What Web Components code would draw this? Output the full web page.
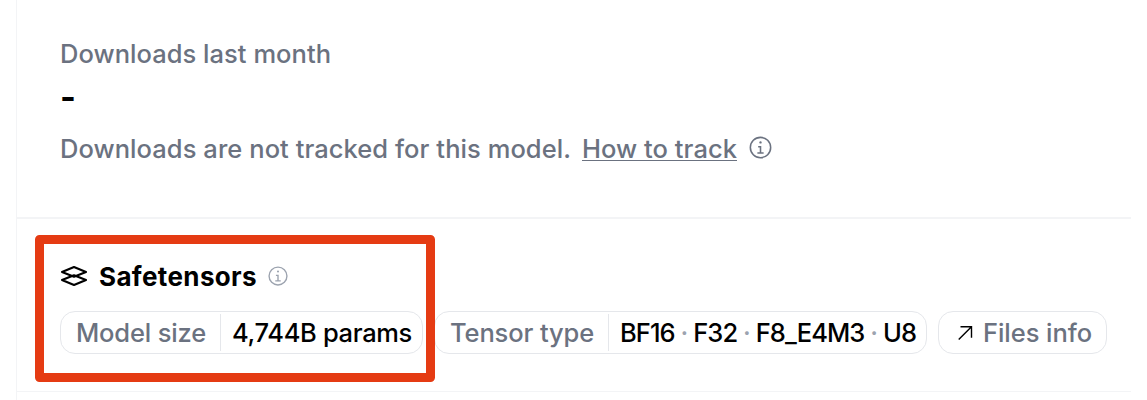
<!DOCTYPE html>
<html lang="en">
<head>
<meta charset="utf-8">
<title>Model sidebar</title>
<style>
html, body { margin: 0; height: 400px; overflow: hidden; background: #fff; }
body { font-family: Inter, "Liberation Sans", sans-serif; color: #000; }
</style>
</head>
<body>
<model-sidebar></model-sidebar>
<script>
const define = (name, html, setup) => {
  const t = document.createElement('template');
  t.innerHTML = html;
  customElements.define(name, class extends HTMLElement {
    constructor() {
      super();
      this.attachShadow({ mode: 'open' }).append(t.content.cloneNode(true));
    }
    connectedCallback() { if (setup) setup(this); }
  });
};

// One line of text whose tracking is adjusted to fill the given width.
define('fit-text', `<style>
:host { display: block; white-space: nowrap; flex: none; font-size: 25.5px; line-height: 32px; font-weight: 450; }
span { display: inline-block; white-space: pre; }
:host([underlined]) span { text-decoration: underline; text-decoration-thickness: 1px; text-underline-offset: 2px; text-decoration-skip-ink: none; }
</style><span><slot></slot></span>`, el => {
  const want = +el.getAttribute('width');
  const span = el.shadowRoot.querySelector('span');
  const spacing = (want - span.getBoundingClientRect().width) / el.textContent.length;
  span.style.letterSpacing = spacing.toFixed(3) + 'px';
  el.style.width = want + 'px';
});

define('info-icon', `<style>
:host { display: block; flex: none; width: 24px; height: 24px; }
svg { display: block; width: 100%; height: 100%; }
</style><svg viewBox="0 0 32 32" fill="currentColor"><path d="M17 22v-8h-4v2h2v6h-3v2h8v-2z"/><path d="M16 8a1.5 1.5 0 1 0 0 3 1.5 1.5 0 0 0 0-3z"/><path d="M16 30a14 14 0 1 1 14-14 14 14 0 0 1-14 14zm0-26a12 12 0 1 0 12 12A12 12 0 0 0 16 4z"/></svg>`);

define('layers-icon', `<style>
:host { display: block; flex: none; width: 28px; height: 22px; }
svg { display: block; }
</style><svg width="28" height="22" viewBox="0 0 28 22" fill="none" stroke="#000" stroke-width="2.1" stroke-linejoin="round"><path d="M14 2 26 7 14 11.8 2 7z"/><path d="M14 10.3 26 15 14 20 2 15z"/></svg>`);

define('arrow-icon', `<style>
:host { display: block; flex: none; width: 16px; height: 16px; }
svg { display: block; }
</style><svg width="16" height="16" viewBox="0 0 16 16" fill="none" stroke="#000" stroke-width="1.4"><path d="M3.5 1.7h11v11M14.2 2 1.7 14.5"/></svg>`);

define('info-pill', `<style>
:host { display: flex; flex: none; box-sizing: border-box; height: 43px; border: 1px solid #e5e7eb; border-radius: 15px; align-items: center; }
.label { display: flex; align-items: center; padding-left: 15px; color: #6b7280; }
.value { display: flex; align-items: center; height: 37px; box-sizing: border-box; border-left: 1px solid #e5e7eb; margin-left: 14px; padding-left: 11px; }
::slotted(fit-text) { position: relative; top: 0.5px; }
::slotted(fit-text:not([slot])) { font-weight: 550; }
:host([plain]) .value { display: none; }
</style><div class="label"><slot name="label"></slot></div><div class="value"><slot></slot></div>`);

define('download-stats', `<style>
:host { display: block; box-sizing: border-box; height: 219px; padding: 38px 0 0 43px; border-bottom: 2px solid #f3f4f6; color: #6b7280; }
.dash { box-sizing: border-box; height: 63px; color: #000; padding-top: 6px; }
.dash fit-text { font-size: 34px; font-weight: 700; line-height: 42px; }
.row { display: flex; align-items: center; }
.link { margin-left: 11px; }
info-icon { width: 25px; height: 25px; margin: -3px 0 0 11px; }
</style>
<fit-text width="271">Downloads last month</fit-text>
<div class="dash"><fit-text width="16">-</fit-text></div>
<div class="row"><fit-text width="511">Downloads are not tracked for this model.</fit-text><fit-text underlined class="link" width="155">How to track</fit-text><info-icon></info-icon></div>`);

define('highlight-frame', `<style>
:host { display: block; box-sizing: border-box; position: absolute; left: 17.5px; top: 15.5px; width: 400px; height: 147px; border: 9px solid #e53b13; border-radius: 4.5px; pointer-events: none; }
</style>`);

define('safetensors-card', `<style>
:host { display: block; position: relative; box-sizing: border-box; height: 173px; padding: 42px 0 0 43px; border-bottom: 1px solid #f3f4f6; }
.head { display: flex; align-items: center; height: 32px; }
.head fit-text { font-size: 26px; font-weight: 650; margin-left: 11px; }
.head info-icon { width: 22px; height: 22px; margin: 0 0 2px 10px; color: #9ca3af; }
layers-icon { margin-bottom: 3px; }
.pills { display: flex; gap: 11px; margin-top: 18px; }
.dot { color: #9ca3af; }
arrow-icon { margin-right: 10px; margin-left: 3px; }
</style>
<div class="head"><layers-icon></layers-icon><fit-text width="158">Safetensors</fit-text><info-icon></info-icon></div>
<div class="pills">
<info-pill style="width:363px"><fit-text slot="label" width="130">Model size</fit-text><fit-text width="180">4,744B params</fit-text></info-pill>
<info-pill style="width:493px"><fit-text slot="label" width="144">Tensor type</fit-text><fit-text width="296">BF16 <span class="dot">·</span> F32 <span class="dot">·</span> F8_E4M3 <span class="dot">·</span> U8</fit-text></info-pill>
<info-pill plain style="width:169px"><arrow-icon slot="label"></arrow-icon><fit-text slot="label" width="109">Files info</fit-text></info-pill>
</div>
<highlight-frame></highlight-frame>`);

define('model-sidebar', `<style>
:host { display: block; box-sizing: border-box; width: 1115px; height: 400px; margin-left: 16px; border-left: 1px solid #f3f4f6; }
</style><download-stats></download-stats><safetensors-card></safetensors-card>`);
</script>
</body>
</html>
